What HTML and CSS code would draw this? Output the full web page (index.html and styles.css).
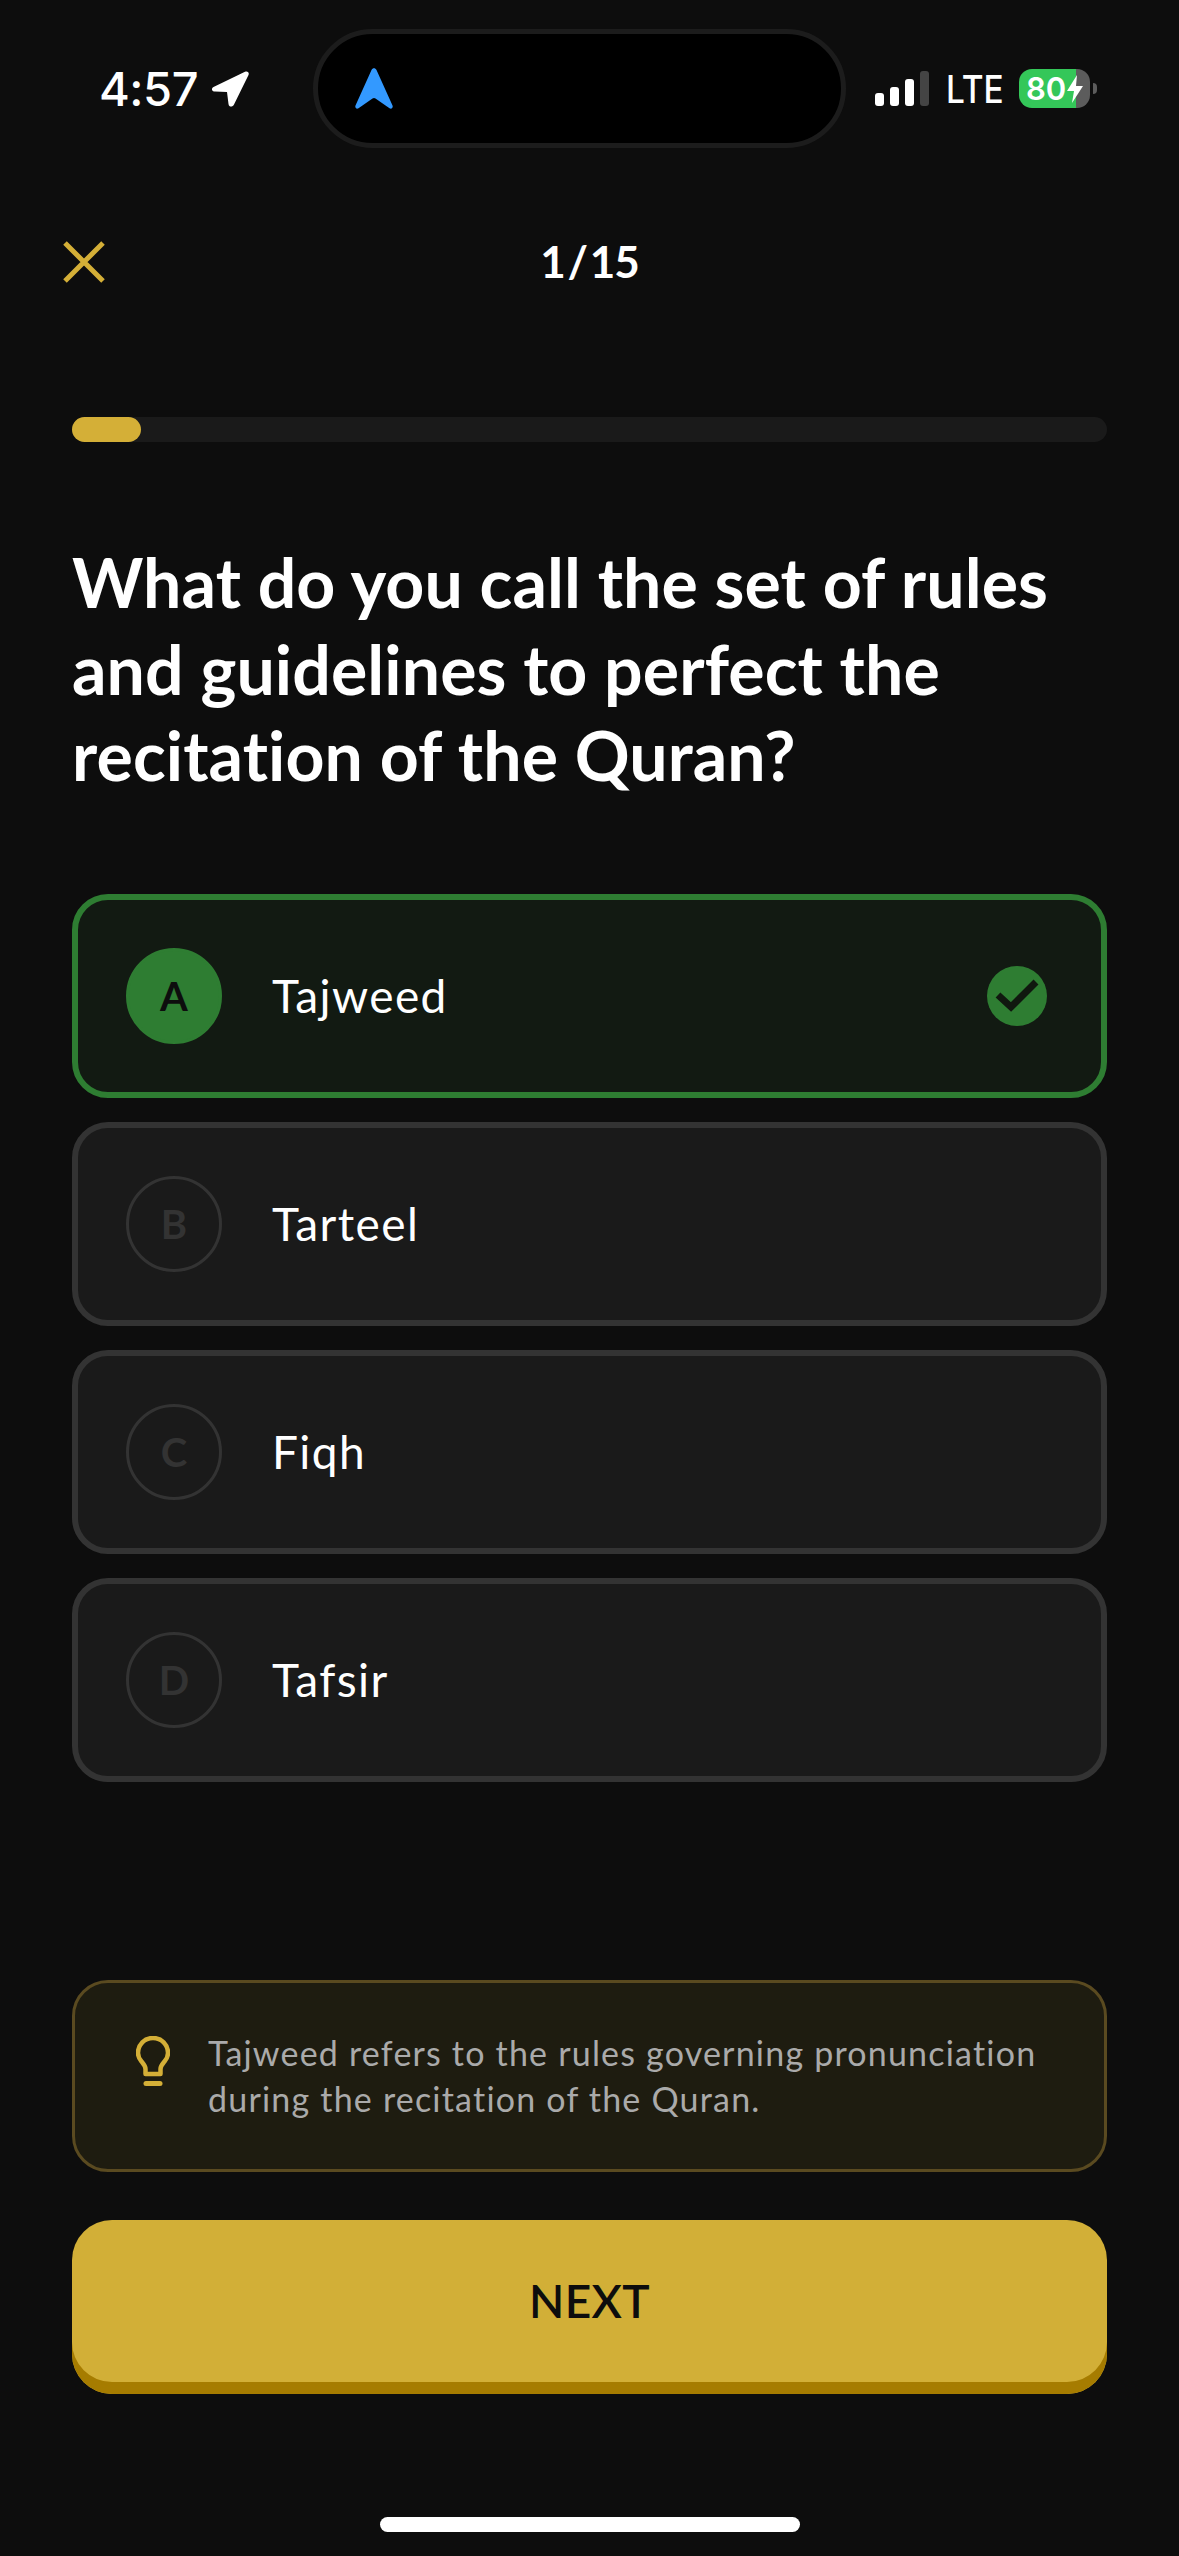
FILE: index.html
```html
<!DOCTYPE html>
<html lang="en">
<head>
    <meta charset="UTF-8">
    <meta name="viewport" content="width=device-width, initial-scale=1.0">
    <title>Quiz</title>
    <link rel="stylesheet" href="styles.css">
</head>
<body>
    <div class="screen">
        <div class="status-bar">
            <div class="status-left">
                <span class="time">4:57</span>
                <svg class="location-icon" viewBox="0 0 37 36">
                    <path d="M1.500 16 33 .8C35.500-.3 37.500 1.500 36.500 4L22 33.500C20.500 36.500 17 36.300 16.500 33L15 21 3 20.500C-.5 20.300-1 17.300 1.500 16Z" />
                </svg>
            </div>
            <div class="island">
                <svg class="nav-icon" viewBox="0 0 38 41">
                    <path d="M16.500 2C17.600-.2 20.400-.2 21.500 2L37.500 37.500C38.400 39.700 36.400 41.600 34.500 40.200L20.500 30.500C19.500 29.800 18.500 29.800 17.500 30.500L3.500 40.200C1.600 41.600-.4 39.700.5 37.500Z" />
                </svg>
            </div>
            <div class="status-right">
                <div class="signal">
                    <span class="bar bar-1"></span>
                    <span class="bar bar-2"></span>
                    <span class="bar bar-3"></span>
                    <span class="bar bar-4"></span>
                </div>
                <span class="network">LTE</span>
                <div class="battery">
                    <span class="battery-level">80</span>
                    <svg class="bolt-icon" viewBox="0 0 16 28">
                        <path d="M10 0 0 16H7L5 28 16 11H9Z" />
                    </svg>
                </div>
                <span class="battery-nib"></span>
            </div>
        </div>

        <div class="top-nav">
            <svg class="close-icon" viewBox="0 0 42 42">
                <path d="M2 2 40 40M40 2 2 40" />
            </svg>
            <div class="counter">1 / 15</div>
        </div>

        <div class="progress">
            <div class="progress-fill"></div>
        </div>

        <h1 class="question">What do you call the set of rules and guidelines to perfect the recitation of the Quran?</h1>

        <div class="options">
            <div class="option correct">
                <span class="letter">A</span>
                <span class="option-text">Tajweed</span>
                <svg class="check-icon" viewBox="0 0 60 60">
                    <circle cx="30" cy="30" r="30" />
                    <path d="M11 29 24 41 49 16" />
                </svg>
            </div>
            <div class="option">
                <span class="letter">B</span>
                <span class="option-text">Tarteel</span>
            </div>
            <div class="option">
                <span class="letter">C</span>
                <span class="option-text">Fiqh</span>
            </div>
            <div class="option">
                <span class="letter">D</span>
                <span class="option-text">Tafsir</span>
            </div>
        </div>

        <div class="hint">
            <svg class="bulb-icon" viewBox="0 0 34 50">
                <path class="bulb-outline" d="M9.500 38V33C9.500 30 8 28.500 5.500 25.500 3 22.500 2 20 2 17 2 8.500 8.500 2 17 2S32 8.500 32 17C32 20 31 22.500 28.500 25.500 26 28.500 24.500 30 24.500 33V38Z" />
                <path class="bulb-base" d="M10 47.500H24" />
            </svg>
            <p class="hint-text">Tajweed refers to the rules governing pronunciation during the recitation of the Quran.</p>
        </div>

        <button class="next-button">NEXT</button>

        <div class="home-indicator"></div>
    </div>
</body>
</html>
```

FILE: styles.css
```css
* {
    box-sizing: border-box;
}

body {
    margin: 0;
    background-color: #0d0d0d;
    color: white;
    font-family: 'Lato', 'Noto Sans', sans-serif;
    font-variant-ligatures: none;
}

.screen {
    width: 1179px;
    height: 2556px;
    overflow: hidden;
    display: flex;
    flex-direction: column;
    padding: 0 72px;
}

/* status bar */
.status-bar {
    display: flex;
    align-items: center;
    height: 119px;
    margin: 29px -72px 0;
    padding-left: 99px;
}

.status-left {
    display: flex;
    align-items: center;
    width: 214px;
    gap: 14px;
}

.time {
    font-family: 'Inter', sans-serif;
    font-size: 47px;
    font-weight: 500;
    letter-spacing: -0.5px;
}

.location-icon {
    width: 37px;
    height: 36px;
    fill: white;
}

.island {
    width: 533px;
    height: 119px;
    display: flex;
    align-items: center;
    padding-left: 37px;
    background-color: black;
    border: 5px solid #1c1c1c;
    border-radius: 60px;
}

.nav-icon {
    width: 38px;
    height: 41px;
    fill: #3399ff;
}

.status-right {
    display: flex;
    align-items: center;
    margin-left: 29px;
}

.signal {
    display: flex;
    align-items: flex-end;
    gap: 6px;
    height: 35px;
}

.bar {
    width: 9px;
    background-color: white;
    border-radius: 3px;
}

.bar-1 {
    height: 13px;
}

.bar-2 {
    height: 19px;
}

.bar-3 {
    height: 27px;
}

.bar-4 {
    height: 35px;
    background-color: #444;
}

.network {
    width: 73px;
    margin-left: 17px;
    font-family: 'Inter', sans-serif;
    font-size: 38px;
    font-weight: 500;
    transform: scaleX(0.88);
    transform-origin: left center;
}

.battery {
    display: flex;
    align-items: center;
    width: 71px;
    height: 39px;
    padding-left: 7px;
    border-radius: 13px;
    background: linear-gradient(to right, #34c759 0, #34c759 57px, #5c5c5c 57px);
}

.battery-level {
    font-family: 'Inter', sans-serif;
    font-size: 31px;
    font-weight: 600;
    line-height: 39px;
}

.bolt-icon {
    width: 16px;
    height: 28px;
    margin-left: 1px;
    fill: white;
}

.battery-nib {
    width: 4px;
    height: 11px;
    margin-left: 3px;
    background-color: #5c5c5c;
    border-radius: 0 6px 6px 0;
}

/* top bar */
.top-nav {
    position: relative;
    display: flex;
    align-items: center;
    justify-content: center;
    height: 60px;
    margin-top: 84px;
}

.close-icon {
    position: absolute;
    left: -9px;
    top: 9px;
    width: 42px;
    height: 42px;
    fill: none;
    stroke: #d4af37;
    stroke-width: 5;
}

.counter {
    font-size: 44px;
    font-weight: 700;
    letter-spacing: -1px;
    word-spacing: -7px;
    margin-top: -2px;
}

.progress {
    height: 25px;
    margin-top: 125px;
    background-color: #1a1a1a;
    border-radius: 13px;
}

.progress-fill {
    width: 69px;
    height: 100%;
    background-color: #d4af37;
    border-radius: 13px;
}

.question {
    margin: 97px 0 0;
    font-size: 68px;
    font-weight: 700;
    line-height: 86.5px;
    letter-spacing: 0.1px;
}

/* answers */
.options {
    display: flex;
    flex-direction: column;
    gap: 24px;
    margin-top: 95px;
}

.option {
    display: flex;
    align-items: center;
    height: 204px;
    padding: 0 54px 0 48px;
    background-color: #1a1a1a;
    border: 6px solid #333;
    border-radius: 36px;
}

.option.correct {
    background-color: #121a12;
    border-color: #2e7d32;
}

.letter {
    display: flex;
    align-items: center;
    justify-content: center;
    width: 96px;
    height: 96px;
    flex-shrink: 0;
    border: 3px solid #333;
    border-radius: 50%;
    color: #333;
    font-size: 40px;
    font-weight: 700;
}

.option.correct .letter {
    background-color: #2e7d32;
    border-color: #2e7d32;
    color: #0d0d0d;
}

.option-text {
    margin-left: 50px;
    font-size: 46px;
    letter-spacing: 1.400px;
}

.check-icon {
    width: 60px;
    height: 60px;
    margin-left: auto;
}

.check-icon circle {
    fill: #2e7d32;
}

.check-icon path {
    fill: none;
    stroke: #10180f;
    stroke-width: 7;
}

/* explanation */
.hint {
    display: flex;
    align-items: flex-start;
    height: 192px;
    margin-top: auto;
    padding: 53px 40px 0 61px;
    background-color: #1e1c10;
    border: 3px solid #5a4a20;
    border-radius: 36px;
}

.bulb-icon {
    width: 34px;
    height: 50px;
    flex-shrink: 0;
    fill: none;
    stroke: #d4af37;
}

.bulb-outline {
    stroke-width: 4.500;
    stroke-linejoin: round;
}

.bulb-base {
    stroke-width: 5;
    stroke-linecap: round;
}

.hint-text {
    margin: -6px 0 0 38px;
    font-size: 34px;
    line-height: 46px;
    letter-spacing: 1.200px;
    color: #aaaaaa;
}

.next-button {
    height: 174px;
    margin-top: 48px;
    padding-bottom: 14px;
    background-color: #d2af37;
    border: none;
    border-radius: 40px;
    box-shadow: inset 0 -12px 0 #a67c00;
    color: #0d0d0d;
    font-family: inherit;
    font-size: 46px;
    font-weight: 600;
    letter-spacing: 0.3px;
}

.home-indicator {
    width: 420px;
    height: 15px;
    margin: 123px auto 24px;
    flex-shrink: 0;
    background-color: white;
    border-radius: 8px;
}
```
